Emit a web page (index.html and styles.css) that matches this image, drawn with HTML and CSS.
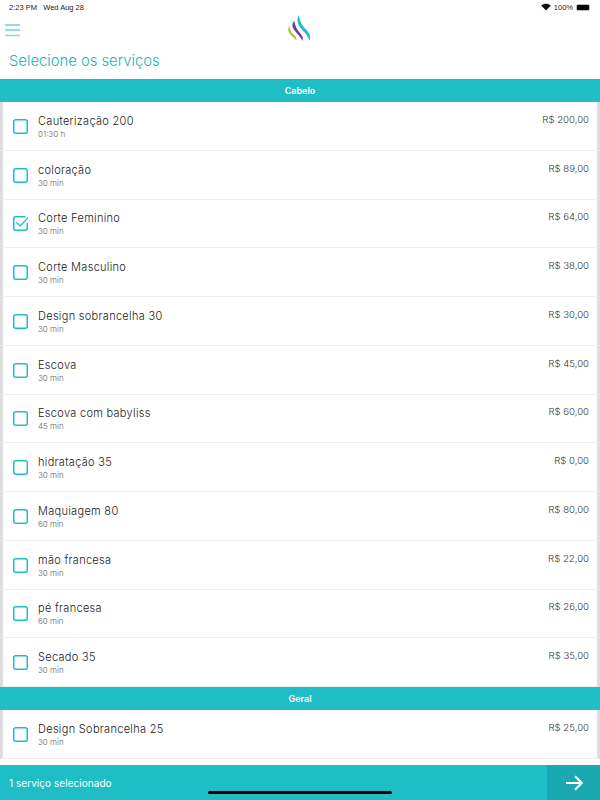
FILE: index.html
```html
<!DOCTYPE html>
<html lang="pt">

<head>
    <meta charset="UTF-8">
    <meta name="viewport" content="width=device-width, initial-scale=1.0">
    <title>Selecione os serviços</title>
    <link rel="stylesheet" href="styles.css">
</head>

<body>
    <svg class="defs" width="0" height="0">
        <symbol id="box" viewBox="0 0 15 15">
            <rect x="0.75" y="0.75" width="13.5" height="13.5" rx="2" fill="none" stroke="#1fbdc5" stroke-width="1.5"/>
        </symbol>
        <symbol id="box-checked" viewBox="0 0 15 15">
            <path d="M12.500 0.750H2.750C1.500 0.750 0.750 1.500 0.750 2.750V12.250C0.750 13.500 1.500 14.250 2.750 14.250H12.250C13.500 14.250 14.250 13.500 14.250 12.250V7" fill="none" stroke="#1fbdc5" stroke-width="1.5"/>
            <path d="M3.400 6.600 7.400 10 14.800 1.600" fill="none" stroke="#1fbdc5" stroke-width="1.3"/>
        </symbol>
    </svg>

    <div class="app">
        <div class="status-bar">
            <span>2:23 PM&nbsp;&nbsp;&nbsp;Wed Aug 28</span>
            <div class="status-right">
                <svg class="wifi" width="10" height="8" viewBox="0 0 10 8">
                    <path d="M5 7.600 0.200 2.600C3 0 7 0 9.800 2.600Z" fill="#111"/>
                </svg>
                <span>100%</span>
                <div class="battery"><div class="battery-fill"></div></div>
            </div>
        </div>

        <div class="header">
            <svg class="menu-icon" width="15" height="13" viewBox="0 0 15 13">
                <path d="M0 1H15M0 6H15" stroke="#1fbdc5" stroke-width="1.200"/>
                <path d="M0 11.500H15" stroke="#7fd8dd" stroke-width="1.500"/>
            </svg>
            <svg class="logo" width="26" height="30" viewBox="0 0 26 30">
                <path d="M2.300 12C0.500 15 1 17 3 20C5 22.500 8 24 9 26.700C10.500 23.500 8 21.500 6 20C4 18 3 15.500 2.300 12Z" fill="#a9c92f"/>
                <path d="M7.300 6.700C4.500 10 5 13 8 17C10.500 20.500 14 23 15.300 27C16.500 24 15.500 22 13 19C10 16 8 12 7.300 6.700Z" fill="#6c3d9e"/>
                <path d="M12 1C9.500 5 10 9 13.500 14C16.500 17.500 21 21 22.500 27C24 23 23 20 20 16.500C16 12.500 12.500 8 12 1Z" fill="#1fbfc6"/>
            </svg>
        </div>

        <h1 class="page-title">Selecione os serviços</h1>

        <div class="list">
            <div class="band">Cabelo</div>
            <div class="row"><svg class="check"><use href="#box"/></svg><div class="info"><div class="name">Cauterização 200</div><div class="time">01:30 h</div></div><div class="price">R$ 200,00</div></div>
            <div class="row"><svg class="check"><use href="#box"/></svg><div class="info"><div class="name">coloração</div><div class="time">30 min</div></div><div class="price">R$ 89,00</div></div>
            <div class="row"><svg class="check"><use href="#box-checked"/></svg><div class="info"><div class="name">Corte Feminino</div><div class="time">30 min</div></div><div class="price">R$ 64,00</div></div>
            <div class="row"><svg class="check"><use href="#box"/></svg><div class="info"><div class="name">Corte Masculino</div><div class="time">30 min</div></div><div class="price">R$ 38,00</div></div>
            <div class="row"><svg class="check"><use href="#box"/></svg><div class="info"><div class="name">Design sobrancelha 30</div><div class="time">30 min</div></div><div class="price">R$ 30,00</div></div>
            <div class="row"><svg class="check"><use href="#box"/></svg><div class="info"><div class="name">Escova</div><div class="time">30 min</div></div><div class="price">R$ 45,00</div></div>
            <div class="row"><svg class="check"><use href="#box"/></svg><div class="info"><div class="name">Escova com babyliss</div><div class="time">45 min</div></div><div class="price">R$ 60,00</div></div>
            <div class="row"><svg class="check"><use href="#box"/></svg><div class="info"><div class="name">hidratação 35</div><div class="time">30 min</div></div><div class="price">R$ 0,00</div></div>
            <div class="row"><svg class="check"><use href="#box"/></svg><div class="info"><div class="name">Maquiagem 80</div><div class="time">60 min</div></div><div class="price">R$ 80,00</div></div>
            <div class="row"><svg class="check"><use href="#box"/></svg><div class="info"><div class="name">mão francesa</div><div class="time">30 min</div></div><div class="price">R$ 22,00</div></div>
            <div class="row"><svg class="check"><use href="#box"/></svg><div class="info"><div class="name">pé francesa</div><div class="time">60 min</div></div><div class="price">R$ 26,00</div></div>
            <div class="row"><svg class="check"><use href="#box"/></svg><div class="info"><div class="name">Secado 35</div><div class="time">30 min</div></div><div class="price">R$ 35,00</div></div>
            <div class="band">Geral</div>
            <div class="row"><svg class="check"><use href="#box"/></svg><div class="info"><div class="name">Design Sobrancelha 25</div><div class="time">30 min</div></div><div class="price">R$ 25,00</div></div>
        </div>

        <div class="footer">
            <div class="footer-text">1 serviço selecionado</div>
            <div class="next">
                <svg width="18" height="16" viewBox="0 0 18 16"><path d="M1 8H16.500M10 1.200 16.800 8 10 14.800" fill="none" stroke="#fff" stroke-width="2"/></svg>
            </div>
            <div class="home-bar"></div>
        </div>
    </div>
</body>
</html>
```

FILE: styles.css
```css
* {
    box-sizing: border-box;
}
body {
    margin: 0;
    font-family: Inter, "Noto Sans", sans-serif;
    color: #333;
    background: #fff;
}
.defs {
    position: absolute;
}
.app {
    position: relative;
    display: flex;
    flex-direction: column;
    width: 600px;
    height: 800px;
    overflow: hidden;
}
.status-bar {
    display: flex;
    justify-content: space-between;
    align-items: center;
    height: 14px;
    padding: 0 10px 0 9px;
    font-family: "Liberation Sans", sans-serif;
    font-size: 7.5px;
    color: #222;
}
.status-right {
    display: flex;
    align-items: center;
    gap: 3px;
}
.battery {
    width: 14px;
    height: 7px;
    padding: 1px;
    border-radius: 2px;
    background: #bbb;
}
.battery-fill {
    height: 100%;
    border-radius: 1px;
    background: #000;
}
.header {
    position: relative;
    display: flex;
    justify-content: center;
    height: 35px;
}
.menu-icon {
    position: absolute;
    left: 5px;
    top: 10px;
}
.page-title {
    margin: 0;
    padding-left: 9px;
    height: 30px;
    font-size: 14.8px;
    font-weight: 300;
    line-height: 24px;
    color: #12b5bd;
}
.list {
    flex: 1;
    overflow: hidden;
    background: #fff;
}
.band {
    height: 23px;
    line-height: 23px;
    text-align: center;
    font-size: 9px;
    font-weight: 600;
    color: #fff;
    background: #1fbdc5;
}
.row {
    display: flex;
    align-items: flex-start;
    height: 48.75px;
    padding: 11.75px 8px 0 10px;
    border-left: 3px solid #ddd;
    border-right: 3px solid #ddd;
    border-bottom: 1px solid #f0f0f0;
}
.check {
    flex: none;
    width: 15px;
    height: 15px;
    margin-top: 5px;
    overflow: visible;
}
.info {
    flex: 1;
    margin-left: 10px;
}
.name {
    font-size: 11px;
    font-weight: 300;
    line-height: 14px;
    letter-spacing: 0.3px;
    color: #222;
}
.time {
    margin-top: 1px;
    font-size: 8px;
    font-weight: 300;
    line-height: 10px;
    color: #666;
}
.price {
    margin-top: -1px;
    font-size: 9.6px;
    font-weight: 300;
    line-height: 13px;
    color: #333;
}
.footer {
    position: relative;
    flex: none;
    display: flex;
    justify-content: space-between;
    align-items: center;
    height: 35px;
    background: #1fbdc5;
}
.footer-text {
    padding-left: 9px;
    font-size: 10px;
    font-weight: 400;
    letter-spacing: 0.05px;
    color: #fff;
}
.next {
    display: flex;
    align-items: center;
    justify-content: center;
    width: 53px;
    height: 100%;
    background: #1aa9b0;
}
.home-bar {
    position: absolute;
    left: 208px;
    bottom: 6px;
    width: 184px;
    height: 3px;
    border-radius: 2px;
    background: #000;
}
```
